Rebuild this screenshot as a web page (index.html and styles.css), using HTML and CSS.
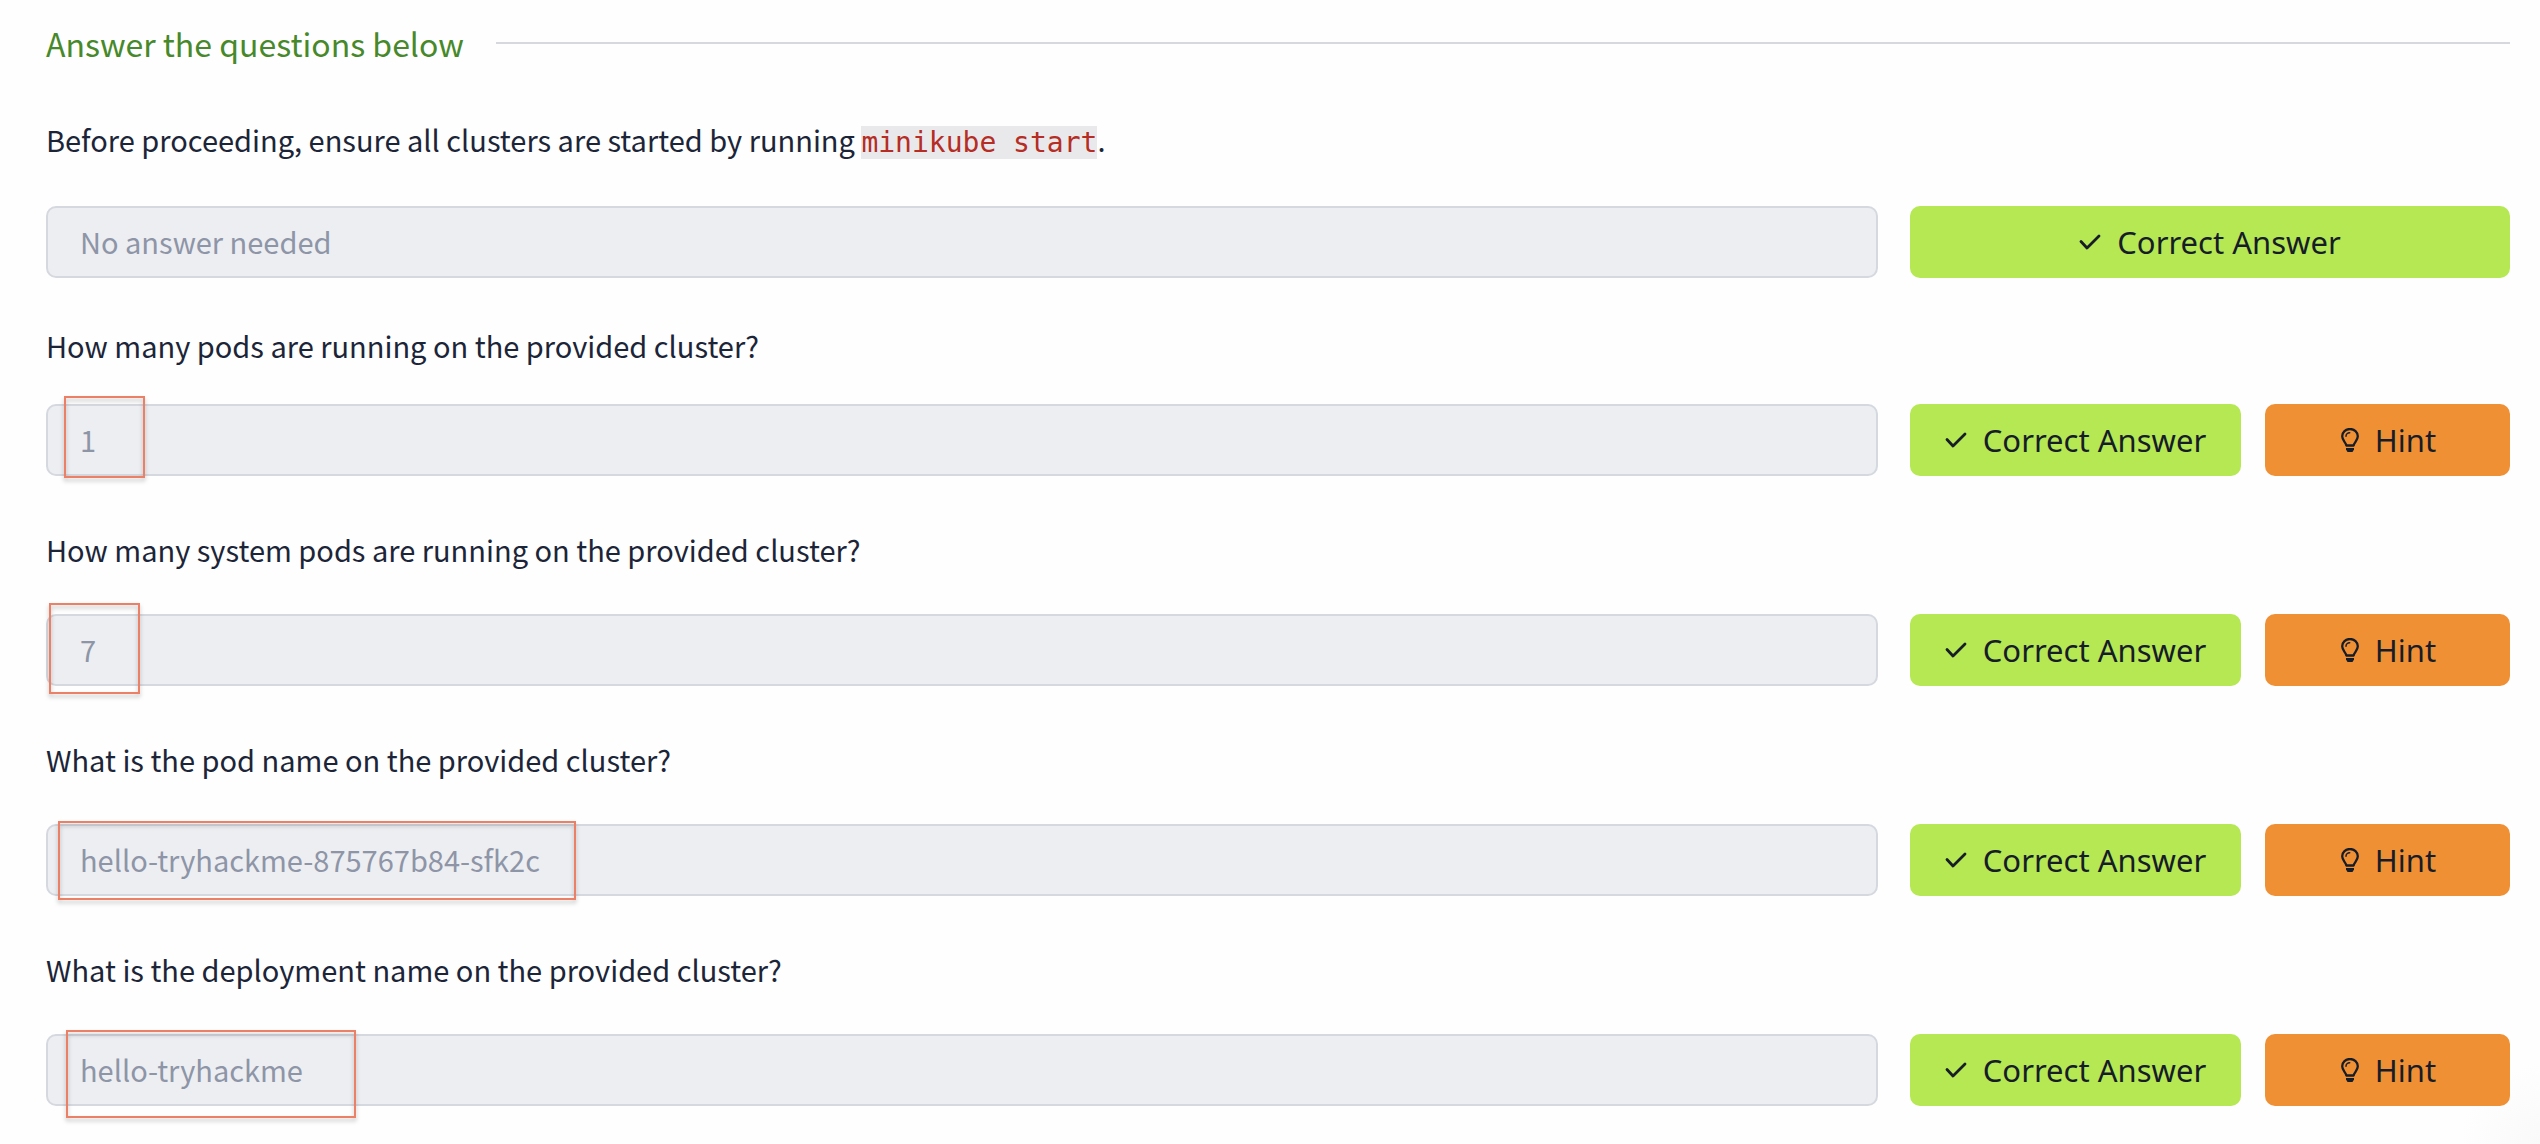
FILE: index.html
```html
<!DOCTYPE html>
<html lang="en">
<head>
<meta charset="utf-8">
<meta name="viewport" content="width=device-width, initial-scale=1">
<title>Answer the questions below</title>
<link rel="stylesheet" href="styles.css">
</head>
<body>
<svg class="sprite" aria-hidden="true">
  <symbol id="icon-check" viewBox="0 0 22 24">
    <path d="M2 11.500 8 18 20 6" fill="none" stroke="currentColor" stroke-width="2.800" stroke-linecap="round" stroke-linejoin="round"/>
  </symbol>
  <symbol id="icon-bulb" viewBox="0 0 18 24">
    <path d="M5.300 17.500C5 14.500 1.200 12.500 1.200 8.300a7.800 7.300 0 0 1 15.600 0c0 4.200-3.800 6.200-4.100 9.200z" fill="none" stroke="currentColor" stroke-width="2.300" stroke-linejoin="round"/>
    <path d="M5 8.200a3.800 3.500 0 0 1 3.700-3.500" fill="none" stroke="currentColor" stroke-width="1.500" stroke-linecap="round"/>
    <path d="M5 19.900h8v1.500L11.500 24h-5L5 21.400z" fill="currentColor"/>
  </symbol>
</svg>
<main class="task">
  <header class="task-header">
    <h1 class="task-title">Answer the questions below</h1>
    <hr class="task-rule">
  </header>
  <form class="questions">
    <section class="question question-intro">
      <label class="prompt" for="answer-1">Before proceeding, ensure all clusters are started by running <code class="command">minikube start</code>.</label>
      <div class="row">
        <div class="field"><input class="answer" id="answer-1" type="text" value="No answer needed" disabled></div>
        <div class="actions">
          <button class="button correct" type="button"><svg class="check" aria-hidden="true"><use href="#icon-check"/></svg>Correct Answer</button>
        </div>
      </div>
    </section>
    <section class="question question-compact">
      <label class="prompt" for="answer-2">How many pods are running on the provided cluster?</label>
      <div class="row">
        <div class="field"><input class="answer" id="answer-2" type="text" value="1" disabled><span class="mark mark-pods"></span></div>
        <div class="actions">
          <button class="button correct" type="button"><svg class="check" aria-hidden="true"><use href="#icon-check"/></svg>Correct Answer</button>
          <button class="button hint" type="button"><svg class="bulb" aria-hidden="true"><use href="#icon-bulb"/></svg>Hint</button>
        </div>
      </div>
    </section>
    <section class="question">
      <label class="prompt" for="answer-3">How many system pods are running on the provided cluster?</label>
      <div class="row">
        <div class="field"><input class="answer" id="answer-3" type="text" value="7" disabled><span class="mark mark-system"></span></div>
        <div class="actions">
          <button class="button correct" type="button"><svg class="check" aria-hidden="true"><use href="#icon-check"/></svg>Correct Answer</button>
          <button class="button hint" type="button"><svg class="bulb" aria-hidden="true"><use href="#icon-bulb"/></svg>Hint</button>
        </div>
      </div>
    </section>
    <section class="question">
      <label class="prompt" for="answer-4">What is the pod name on the provided cluster?</label>
      <div class="row">
        <div class="field"><input class="answer" id="answer-4" type="text" value="hello-tryhackme-875767b84-sfk2c" disabled><span class="mark mark-name"></span></div>
        <div class="actions">
          <button class="button correct" type="button"><svg class="check" aria-hidden="true"><use href="#icon-check"/></svg>Correct Answer</button>
          <button class="button hint" type="button"><svg class="bulb" aria-hidden="true"><use href="#icon-bulb"/></svg>Hint</button>
        </div>
      </div>
    </section>
    <section class="question">
      <label class="prompt" for="answer-5">What is the deployment name on the provided cluster?</label>
      <div class="row">
        <div class="field"><input class="answer" id="answer-5" type="text" value="hello-tryhackme" disabled><span class="mark mark-deployment"></span></div>
        <div class="actions">
          <button class="button correct" type="button"><svg class="check" aria-hidden="true"><use href="#icon-check"/></svg>Correct Answer</button>
          <button class="button hint" type="button"><svg class="bulb" aria-hidden="true"><use href="#icon-bulb"/></svg>Hint</button>
        </div>
      </div>
    </section>
  </form>
</main>
</body>
</html>
```
FILE: styles.css
```css
* {
  box-sizing: border-box;
}

body {
  min-height: 100vh;
  margin: 0;
  background: #fefefe radial-gradient(circle at 100% 100%, #f9f9f9, #fefefe 80px) no-repeat;
  color: #1c2538;
  font-family: "Noto Sans CJK SC", "Noto Sans", sans-serif;
  font-size: 29px;
  line-height: 48px;
}

.sprite {
  position: absolute;
  width: 0;
  height: 0;
}

.task {
  padding: 19px 30px 32px 46px;
}

.task-header {
  display: flex;
  align-items: center;
  gap: 32px;
}

.task-title {
  margin: 0;
  color: #47892a;
  font-size: 32px;
  font-weight: 400;
}

.task-rule {
  flex: 1;
  height: 2px;
  margin: 0;
  border: 0;
  background: #d5d8df;
}

.question {
  margin-top: 49px;
}

.question-intro {
  margin-top: 48px;
}

.question-compact {
  margin-top: 43px;
}

.prompt {
  display: block;
  margin-bottom: 41px;
}

.question-intro .prompt {
  margin-bottom: 43px;
}

.question-compact .prompt {
  margin-bottom: 35px;
}

.command {
  background: #e9e9ec;
  color: #b52d24;
  font-family: "DejaVu Sans Mono", monospace;
  font-size: 28px;
  line-height: 24px;
}

.row {
  display: grid;
  grid-template-columns: minmax(0, 1fr) 600px;
  gap: 32px;
}

.field {
  position: relative;
}

.answer {
  display: block;
  width: 100%;
  height: 72px;
  padding: 0 32px 2px;
  border: 2px solid #d5d8df;
  border-radius: 10px;
  background: #edeef2;
  color: #8d95a7;
  font: inherit;
}

.actions {
  display: flex;
  gap: 24px;
}

.button {
  display: flex;
  align-items: center;
  justify-content: center;
  gap: 16px;
  height: 72px;
  padding: 0;
  border: 0;
  border-radius: 10px;
  color: #171c29;
  font-family: "Noto Sans", sans-serif;
  font-size: 31px;
}

.correct {
  flex: 1;
  background: #b5e853;
}

.hint {
  width: 245px;
  padding-left: 2px;
  background: #f09035;
}

.check {
  width: 22px;
  height: 24px;
}

.bulb {
  width: 18px;
  height: 24px;
}

.mark {
  position: absolute;
  border: 2px solid #ec8066;
  filter: drop-shadow(0 3px 2px rgba(0, 0, 0, 0.25));
  pointer-events: none;
}

.mark-pods {
  top: -8px;
  left: 18px;
  width: 81px;
  height: 82px;
}

.mark-system {
  top: -11px;
  left: 3px;
  width: 91px;
  height: 91px;
}

.mark-name {
  top: -3px;
  left: 12px;
  width: 518px;
  height: 79px;
}

.mark-deployment {
  top: -4px;
  left: 20px;
  width: 290px;
  height: 88px;
}
```
